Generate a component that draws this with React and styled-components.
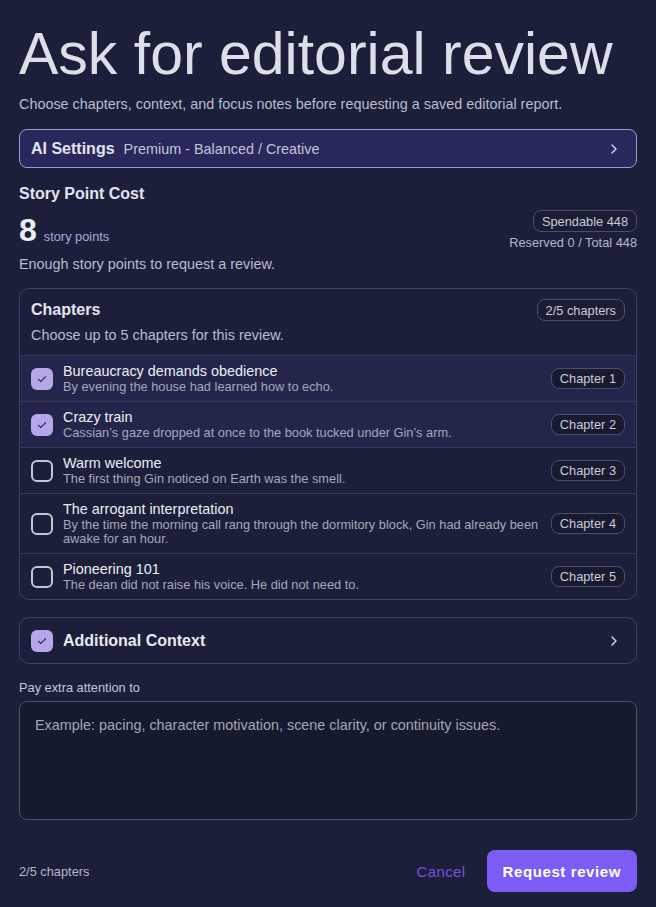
import React from "react";
import styled, { createGlobalStyle } from "styled-components";

const Global = createGlobalStyle`
  html, body { margin: 0; padding: 0; background: #1c1f3a; }
  body { font-family: "Liberation Sans", Arial, sans-serif; color: #dde0ea; }
  * { box-sizing: border-box; }
`;

const Page = styled.div`
  width: 656px;
  min-height: 907px;
  background: #1c1f3a;
  padding: 22px 19px 0 19px;
  display: flex;
  flex-direction: column;
`;

const Title = styled.h1`
  margin: 0;
  font-size: 59px;
  line-height: 65px;
  font-weight: 400;
  color: #dcdfea;
  white-space: nowrap;
`;

const Subtitle = styled.p`
  margin: 7px 0 0;
  font-size: 14.4px;
  line-height: 20px;
  color: #b9bccc;
`;

const SettingsBar = styled.button`
  margin-top: 15px;
  height: 39px;
  width: 100%;
  display: flex;
  align-items: center;
  gap: 9px;
  padding: 0 14px 0 11px;
  background: #28285a;
  border: 1px solid #a497dc;
  border-radius: 8px;
  font-family: inherit;
  cursor: pointer;
  text-align: left;
`;

const SettingsLabel = styled.span`
  font-size: 16px;
  font-weight: 700;
  color: #e3e4ee;
`;

const SettingsValue = styled.span`
  font-size: 14.4px;
  color: #c3c4dc;
  flex: 1;
`;

const Chevron = () => (
  <svg width="16" height="16" viewBox="0 0 24 24" fill="none" stroke="#d4d6e4" strokeWidth="2.2" strokeLinecap="round" strokeLinejoin="round">
    <path d="M9 6l6 6-6 6" />
  </svg>
);

const SectionTitle = styled.h2`
  margin: 16px 0 0;
  font-size: 16px;
  line-height: 20px;
  font-weight: 700;
  color: #e3e4ee;
`;

const CostRow = styled.div`
  margin-top: 6px;
  display: flex;
  justify-content: space-between;
  align-items: flex-start;
`;

const CostLeft = styled.div`
  display: flex;
  align-items: baseline;
  gap: 7px;
  margin-top: 2px;
`;

const CostNumber = styled.span`
  font-size: 32px;
  line-height: 36px;
  font-weight: 700;
  color: #eceef5;
`;

const CostUnit = styled.span`
  font-size: 12.8px;
  color: #aaa9d4;
`;

const CostRight = styled.div`
  display: flex;
  flex-direction: column;
  align-items: flex-end;
  gap: 3px;
`;

const Pill = styled.span`
  display: inline-flex;
  align-items: center;
  height: ${(p) => p.$h || 22}px;
  padding: 0 8px;
  border: 1px solid #4a4e6a;
  border-radius: 8px;
  background: ${(p) => p.$bg || "#1a1d34"};
  font-size: 12.8px;
  color: #c9cbd9;
  white-space: nowrap;
`;

const SmallMuted = styled.span`
  font-size: 12.8px;
  line-height: 16px;
  color: #b4b7c8;
`;

const Note = styled.p`
  margin: 3px 0 0;
  font-size: 14.4px;
  line-height: 20px;
  color: #b9bccc;
`;

const Card = styled.div`
  margin-top: ${(p) => p.$mt || 0}px;
  border: 1px solid #3d4160;
  border-radius: 10px;
  overflow: hidden;
`;

const CardHeader = styled.div`
  padding: 10px 11px 10px 11px;
  border-bottom: 1px solid #353955;
`;

const HeaderRow = styled.div`
  display: flex;
  justify-content: space-between;
  align-items: center;
`;

const CardTitle = styled.span`
  font-size: 16px;
  font-weight: 700;
  color: #e3e4ee;
`;

const CardSub = styled.p`
  margin: 4px 0 0;
  font-size: 14.4px;
  line-height: 20px;
  color: #b9bccc;
`;

const Row = styled.label`
  display: flex;
  align-items: center;
  gap: 10px;
  padding: 7px 11px 7px 11px;
  background: ${(p) => (p.$selected ? "#23264a" : "transparent")};
  border-top: ${(p) => (p.$first ? "none" : "1px solid #353955")};
  cursor: pointer;
`;

const Box = styled.span`
  flex: none;
  width: 22px;
  height: 22px;
  border-radius: 6px;
  display: inline-flex;
  align-items: center;
  justify-content: center;
  background: ${(p) => (p.$checked ? "#b7a7ea" : "transparent")};
  border: ${(p) => (p.$checked ? "none" : "2px solid #c4c6d4")};
`;

const Check = () => (
  <svg width="12" height="12" viewBox="0 0 24 24" fill="none" stroke="#3b3660" strokeWidth="2.4" strokeLinecap="round" strokeLinejoin="round">
    <path d="M5 12.5l4.5 4.5L19 7.5" />
  </svg>
);

const RowText = styled.div`
  flex: 1;
  display: flex;
  flex-direction: column;
  min-width: 0;
`;

const RowTitle = styled.span`
  font-size: 14.4px;
  line-height: 17px;
  color: #eceef5;
`;

const RowDesc = styled.span`
  font-size: 12.8px;
  line-height: 14px;
  color: #a4a7bb;
`;

const ContextCard = styled.div`
  margin-top: 17px;
  height: 47px;
  border: 1px solid #3d4160;
  border-radius: 10px;
  display: flex;
  align-items: center;
  gap: 10px;
  padding: 0 14px 0 11px;
`;

const ContextLabel = styled.span`
  flex: 1;
  font-size: 16px;
  font-weight: 700;
  color: #e8e9f2;
`;

const FieldLabel = styled.label`
  margin-top: 16px;
  font-size: 12.8px;
  line-height: 16px;
  color: #c4c6d4;
`;

const TextArea = styled.textarea`
  margin-top: 5px;
  width: 100%;
  height: 119px;
  resize: none;
  background: #161a2e;
  border: 1px solid #4b4e64;
  border-radius: 8px;
  padding: 13px 15px;
  font-family: "Liberation Sans", Arial, sans-serif;
  font-size: 14.4px;
  line-height: 20px;
  color: #dde0ea;
  outline: none;
  &::placeholder { color: #a3a6b8; }
`;

const Footer = styled.div`
  margin-top: 30px;
  display: flex;
  align-items: center;
`;

const FooterCount = styled.span`
  flex: 1;
  font-size: 12.8px;
  color: #b4b7c8;
`;

const CancelButton = styled.button`
  background: none;
  border: none;
  padding: 0;
  margin-right: 21px;
  font-family: inherit;
  font-size: 15px;
  letter-spacing: 0.4px;
  color: #6e55dc;
  cursor: pointer;
`;

const PrimaryButton = styled.button`
  height: 42px;
  padding: 0 16px;
  background: #7c5cf5;
  border: none;
  border-radius: 8px;
  font-family: inherit;
  font-size: 15px;
  font-weight: 700;
  letter-spacing: 0.6px;
  color: #ffffff;
  cursor: pointer;
`;

const chapters = [
  { title: "Bureaucracy demands obedience", desc: "By evening the house had learned how to echo.", n: 1, sel: true },
  { title: "Crazy train", desc: "Cassian\u2019s gaze dropped at once to the book tucked under Gin\u2019s arm.", n: 2, sel: true },
  { title: "Warm welcome", desc: "The first thing Gin noticed on Earth was the smell.", n: 3, sel: false },
  { title: "The arrogant interpretation", desc: "By the time the morning call rang through the dormitory block, Gin had already been awake for an hour.", n: 4, sel: false },
  { title: "Pioneering 101", desc: "The dean did not raise his voice. He did not need to.", n: 5, sel: false },
];

export default function App() {
  return (
    <>
      <Global />
      <Page>
        <Title>Ask for editorial review</Title>
        <Subtitle>Choose chapters, context, and focus notes before requesting a saved editorial report.</Subtitle>
        <SettingsBar>
          <SettingsLabel>AI Settings</SettingsLabel>
          <SettingsValue>Premium - Balanced / Creative</SettingsValue>
          <Chevron />
        </SettingsBar>

        <SectionTitle>Story Point Cost</SectionTitle>
        <CostRow>
          <CostLeft>
            <CostNumber>8</CostNumber>
            <CostUnit>story points</CostUnit>
          </CostLeft>
          <CostRight>
            <Pill>Spendable 448</Pill>
            <SmallMuted>Reserved 0 / Total 448</SmallMuted>
          </CostRight>
        </CostRow>
        <Note>Enough story points to request a review.</Note>

        <Card $mt={14}>
          <CardHeader>
            <HeaderRow>
              <CardTitle>Chapters</CardTitle>
              <Pill>2/5 chapters</Pill>
            </HeaderRow>
            <CardSub>Choose up to 5 chapters for this review.</CardSub>
          </CardHeader>
          {chapters.map((c, i) => (
            <Row key={c.n} $selected={c.sel} $first={i === 0}>
              <Box $checked={c.sel}>{c.sel && <Check />}</Box>
              <RowText>
                <RowTitle>{c.title}</RowTitle>
                <RowDesc>{c.desc}</RowDesc>
              </RowText>
              <Pill $h={21} $bg="#181a30">Chapter {c.n}</Pill>
            </Row>
          ))}
        </Card>

        <ContextCard>
          <Box $checked>
            <Check />
          </Box>
          <ContextLabel>Additional Context</ContextLabel>
          <Chevron />
        </ContextCard>

        <FieldLabel>Pay extra attention to</FieldLabel>
        <TextArea placeholder="Example: pacing, character motivation, scene clarity, or continuity issues." />

        <Footer>
          <FooterCount>2/5 chapters</FooterCount>
          <CancelButton>Cancel</CancelButton>
          <PrimaryButton>Request review</PrimaryButton>
        </Footer>
      </Page>
    </>
  );
}
